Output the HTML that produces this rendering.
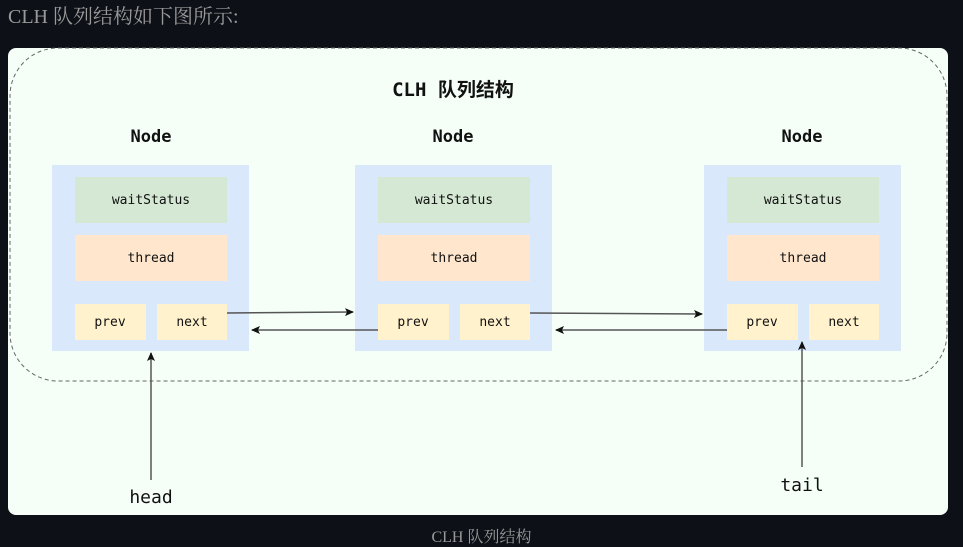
<!DOCTYPE html>
<html><head><meta charset="utf-8"><style>
body{margin:0;background:#0d1117;width:963px;height:545px;overflow:hidden;position:relative}
.t{position:absolute;left:8px;top:0px;color:#9a9a9a;font:20px "Liberation Serif","Noto Serif CJK SC",serif}
.c{position:absolute;left:0;width:963px;top:524px;text-align:center;color:#9a9a9a;font:16px "Liberation Serif","Noto Serif CJK SC",serif}
svg{position:absolute;left:0;top:0}
text{font-family:"DejaVu Sans Mono","Liberation Mono","Noto Sans CJK SC",monospace;fill:#111}
</style></head><body>
<div class="t">CLH 队列结构如下图所示:</div>
<svg width="963" height="545">
<defs><marker id="a" markerWidth="10" markerHeight="10" refX="8" refY="4" orient="auto" markerUnits="userSpaceOnUse"><path d="M0,0 L9,4 L0,8 L2,4z" fill="#111"/></marker></defs>
<rect x="8" y="48" width="940" height="467" rx="8" fill="#f5fff7"/>
<rect x="10" y="48" width="937" height="333" rx="48" fill="none" stroke="#666" stroke-dasharray="4 3"/>
<text x="453" y="96" text-anchor="middle" font-size="19" font-weight="bold">CLH 队列结构</text>
<g font-size="17" text-anchor="middle" font-weight="bold" fill="#222"><text x="151" y="142">Node</text><text x="453" y="142">Node</text><text x="802" y="142">Node</text></g>
<g id="n">
<rect x="52" y="165" width="197" height="186" fill="#dae8fc"/>
<rect x="75" y="177" width="152" height="46" fill="#d5e8d4"/>
<rect x="75" y="235" width="152" height="46" fill="#ffe6cc"/>
<rect x="75" y="304" width="71" height="36" fill="#fff2cc"/>
<rect x="157" y="304" width="70" height="36" fill="#fff2cc"/>
<g font-size="13" text-anchor="middle"><text x="151" y="204">waitStatus</text><text x="151" y="262">thread</text><text x="110" y="326">prev</text><text x="192" y="326">next</text></g>
</g>
<use href="#n" x="303"/><use href="#n" x="652"/>
<g stroke="#555" stroke-width="1.5" marker-end="url(#a)" fill="none">
<path d="M227 313 L353 312"/><path d="M378 330 L252 330"/>
<path d="M530 313 L702 314"/><path d="M727 330 L556 330"/>
<path d="M151 480 L151 353"/><path d="M802 467 L802 342"/>
</g>
<g font-size="18" text-anchor="middle"><text x="151" y="503">head</text><text x="802" y="491">tail</text></g>
</svg>
<div class="c">CLH 队列结构</div>
</body></html>
